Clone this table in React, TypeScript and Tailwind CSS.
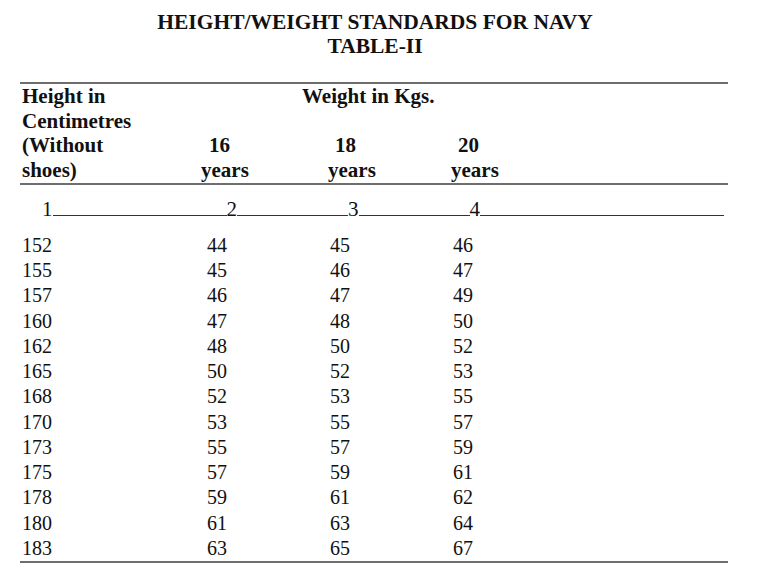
import React from "react";

const rows: [number, number, number, number][] = [
  [152, 44, 45, 46],
  [155, 45, 46, 47],
  [157, 46, 47, 49],
  [160, 47, 48, 50],
  [162, 48, 50, 52],
  [165, 50, 52, 53],
  [168, 52, 53, 55],
  [170, 53, 55, 57],
  [173, 55, 57, 59],
  [175, 57, 59, 61],
  [178, 59, 61, 62],
  [180, 61, 63, 64],
  [183, 63, 65, 67],
];

function Rule() {
  return <div className="h-[2px] w-[708px] bg-[#6e6e6e]" />;
}

export default function App() {
  return (
    <div className="w-[768px] h-[580px] bg-white text-[#111] font-['Liberation_Serif',serif] overflow-hidden">
      {/* Title */}
      <div className="w-[750px] pt-[10px] text-center font-bold text-[21.5px] leading-[24px]">
        <div>HEIGHT/WEIGHT STANDARDS FOR NAVY</div>
        <div>TABLE-II</div>
      </div>

      <div className="pl-[20px] mt-[24px]">
        <Rule />

        {/* Header */}
        <div className="grid grid-cols-[179px_127px_123px_1fr] pl-[2px] font-bold text-[21px] leading-[24.7px]">
          <div>
            <div>Height in</div>
            <div>Centimetres</div>
            <div>(Without</div>
            <div>shoes)</div>
          </div>
          <div className="col-span-3 grid grid-cols-[127px_123px_1fr]">
            <div className="col-span-3 pl-[101px]">Weight in Kgs.</div>
            <div className="col-span-3">&nbsp;</div>
            <div>
              <div className="pl-[8px]">16</div>
              <div>years</div>
            </div>
            <div>
              <div className="pl-[7px]">18</div>
              <div>years</div>
            </div>
            <div>
              <div className="pl-[7px]">20</div>
              <div>years</div>
            </div>
          </div>
        </div>

        <Rule />

        {/* Column numbers */}
        <div className="flex items-end mt-[14px] text-[21px] leading-[20px]">
          <span className="w-[22px]" />
          <span>1</span>
          <span className="w-[174px] h-0 border-b-[1.5px] border-[#333] mb-[3px]" />
          <span>2</span>
          <span className="w-[111px] h-0 border-b-[1.5px] border-[#333] mb-[3px]" />
          <span>3</span>
          <span className="w-[111px] h-0 border-b-[1.5px] border-[#333] mb-[3px]" />
          <span>4</span>
          <span className="w-[244px] h-0 border-b-[1.5px] border-[#333] mb-[3px]" />
        </div>

        {/* Data */}
        <div className="mt-[14px] pl-[2px] text-[20px] leading-[25.25px]">
          {rows.map((r) => (
            <div key={r[0]} className="grid grid-cols-[185px_123px_123px_1fr]">
              <div>{r[0]}</div>
              <div>{r[1]}</div>
              <div>{r[2]}</div>
              <div>{r[3]}</div>
            </div>
          ))}
        </div>

        <Rule />
      </div>
    </div>
  );
}
